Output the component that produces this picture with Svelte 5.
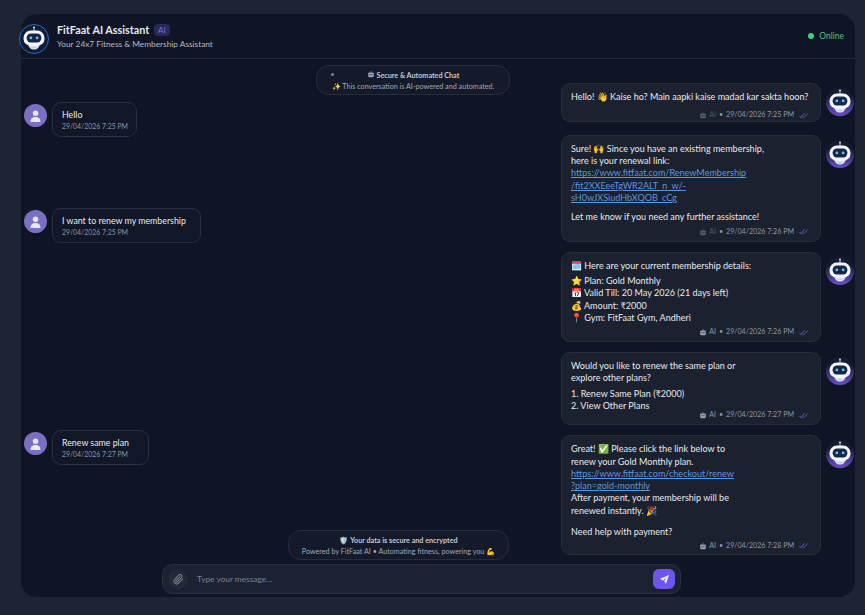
<script>
	const userMessages = [
		{ text: 'Hello', time: '29/04/2026 7:25 PM', gap: 43, width: 85 },
		{ text: 'I want to renew my membership', time: '29/04/2026 7:25 PM', gap: 71, width: 149 },
		{ text: 'Renew same plan', time: '29/04/2026 7:27 PM', gap: 187, width: 97 }
	];
</script>

{#snippet robot()}
	<svg class="robot-art" viewBox="0 0 40 40">
		<rect x="19.4" y="3" width="1.2" height="6" fill="#dfe4f2" />
		<circle cx="20" cy="3.500" r="1.300" fill="#dfe4f2" />
		<path d="M12 27h16c0 5-3.500 8-8 8s-8-3-8-8z" fill="#dcdff0" />
		<rect x="5" y="8" width="30" height="22" rx="10.500" fill="#f5f6fc" />
		<rect x="9.500" y="12" width="21" height="13" rx="6" fill="#182544" />
		<circle cx="15.500" cy="18.500" r="2" fill="#5fc4f5" />
		<circle cx="24.500" cy="18.500" r="2" fill="#5fc4f5" />
		<path d="M18 32h4" stroke="#7fd8e8" stroke-width="1" stroke-linecap="round" />
	</svg>
{/snippet}

{#snippet botIcon()}
	<svg width="8" height="8" viewBox="0 0 10 10"><rect x="1.500" y="3" width="7" height="6" rx="1.500" fill="#9aa4b8" /><rect x="4.600" y="1" width="0.800" height="2" fill="#9aa4b8" /><circle cx="3.800" cy="5.800" r="0.700" fill="#1b212e" /><circle cx="6.200" cy="5.800" r="0.700" fill="#1b212e" /></svg>
{/snippet}

{#snippet meta(time, dim)}
	<div class="meta">
		<span class="tag" class:dim>{@render botIcon()} AI</span>
		<span class="dot">•</span>
		<span>{time}</span>
		<svg class="ticks" width="10" height="7" viewBox="0 0 11 7" fill="none" stroke="#6d63d8" stroke-width="0.900"><path d="M0.500 4l1.600 2L6 1" /><path d="M4 6l1 0L10 1" /></svg>
	</div>
{/snippet}

<div class="page">
	<div class="panel">
		<header class="top">
			<div class="avatar head-avatar">{@render robot()}</div>
			<div class="head-text">
				<div class="title">FitFaat AI Assistant <span class="badge">AI</span></div>
				<div class="sub">Your 24x7 Fitness &amp; Membership Assistant</div>
			</div>
			<div class="status"><span class="status-dot"></span>Online</div>
		</header>

		<div class="chat">
			<div class="notice notice-top">
				<span class="notice-dot"></span>
				<div>{@render botIcon()} <b>Secure &amp; Automated Chat</b></div>
				<div>✨ This conversation is AI-powered and automated.</div>
			</div>

			<div class="col-left">
				{#each userMessages as m}
					<div class="user-row" style="margin-top: {m.gap}px">
						<div class="user-avatar">
							<svg width="11" height="12" viewBox="0 0 12 13" fill="#e8e6f6"><circle cx="6" cy="3.400" r="3" /><path d="M0.500 13c0-3.600 2-5.400 5.500-5.400s5.500 1.800 5.500 5.400z" /></svg>
						</div>
						<div class="user-bubble" style="width: {m.width}px">
							<div class="text">{m.text}</div>
							<div class="user-time">{m.time}</div>
						</div>
					</div>
				{/each}
			</div>

			<div class="col-right">
				<div class="bot-row first">
					<div class="bubble">
						<p>Hello! 👋 Kaise ho? Main aapki kaise madad kar sakta hoon?</p>
						{@render meta('29/04/2026 7:25 PM', true)}
					</div>
					<div class="avatar">{@render robot()}</div>
				</div>
				<div class="bot-row second">
					<div class="bubble">
						<p>Sure! 🙌 Since you have an existing membership,<br />here is your renewal link:<br />
							<span class="link">https://www.fitfaat.com/RenewMembership<br />/fit2XXEeeTgWR2ALT_n_w/-<br />sH0wJXSiudHbXQOB_cCg</span></p>
						<p class="next">Let me know if you need any further assistance!</p>
						{@render meta('29/04/2026 7:26 PM', true)}
					</div>
					<div class="avatar">{@render robot()}</div>
				</div>
				<div class="bot-row">
					<div class="bubble">
						<p>🗓️ Here are your current membership details:</p>
						<p class="list">⭐ Plan: Gold Monthly<br />📅 Valid Till: 20 May 2026 (21 days left)<br />💰 Amount: ₹2000<br />📍 Gym: FitFaat Gym, Andheri</p>
						{@render meta('29/04/2026 7:26 PM', false)}
					</div>
					<div class="avatar">{@render robot()}</div>
				</div>
				<div class="bot-row fourth">
					<div class="bubble">
						<p>Would you like to renew the same plan or<br />explore other plans?</p>
						<p class="list">1. Renew Same Plan (₹2000)<br />2. View Other Plans</p>
						{@render meta('29/04/2026 7:27 PM', false)}
					</div>
					<div class="avatar">{@render robot()}</div>
				</div>
				<div class="bot-row">
					<div class="bubble">
						<p>Great! ✅ Please click the link below to<br />renew your Gold Monthly plan.<br />
							<span class="link">https://www.fitfaat.com/checkout/renew<br />?plan=gold-monthly</span><br />
							After payment, your membership will be<br />renewed instantly. 🎉</p>
						<p class="next last">Need help with payment?</p>
						{@render meta('29/04/2026 7:28 PM', false)}
					</div>
					<div class="avatar">{@render robot()}</div>
				</div>
			</div>

			<div class="notice notice-bottom">
				<div>🛡️ <b>Your data is secure and encrypted</b></div>
				<div>Powered by FitFaat AI • Automating fitness, powering you 💪</div>
			</div>

			<div class="composer">
				<div class="clip">
					<svg width="11" height="11" viewBox="0 0 24 24" fill="none" stroke="#79808f" stroke-width="2.200" stroke-linecap="round" stroke-linejoin="round"><path d="M21 11l-9 9a6 6 0 0 1-8.500-8.500l9-9a4 4 0 0 1 5.700 5.700l-9 9a2 2 0 0 1-2.800-2.800l8.300-8.300" /></svg>
				</div>
				<span class="placeholder">Type your message...</span>
				<button class="send" aria-label="Send">
					<svg width="11" height="11" viewBox="0 0 24 24" fill="#f3f1ff"><path d="M22 2L2 10.500l7 3.500 9-8-6.500 9.500 3.500 6.500z" /></svg>
				</button>
			</div>
		</div>
	</div>
</div>

<style>
	:global(body) {
		background: #1e2434;
		font-family: Lato, "Noto Sans", sans-serif;
	}

	.page {
		width: 865px;
		height: 615px;
		padding: 14px 10px 18px 21px;
		box-sizing: border-box;
		overflow: hidden;
	}

	.panel {
		height: 100%;
		background: #0f1524;
		border-radius: 16px;
		display: flex;
		flex-direction: column;
	}

	.top {
		height: 44px;
		flex: none;
		display: flex;
		align-items: center;
		border-bottom: 1px solid #232a3a;
		padding-right: 11px;
	}

	.avatar {
		width: 28px;
		height: 28px;
		flex: none;
		margin-top: 5px;
		border-radius: 50%;
		background: linear-gradient(#161c33 30%, #6a50cf);
	}

	.robot-art {
		display: block;
		width: 100%;
		height: 100%;
	}

	.head-avatar {
		box-sizing: border-box;
		width: 30px;
		height: 30px;
		margin-left: -2px;
		margin-top: 6px;
		background: #121c36;
		border: 1.500px solid #1f6fc0;
	}

	.head-text {
		margin-left: 8px;
		flex: 1;
		margin-top: 1px;
	}

	.title {
		font-size: 10.800px;
		font-weight: 700;
		color: #e6e9f0;
		line-height: 16px;
	}

	.badge {
		display: inline-block;
		font-size: 8px;
		font-weight: 400;
		color: #7a6ee0;
		background: #2a2a58;
		border-radius: 4px;
		padding: 0 4px;
		line-height: 12px;
		margin-left: 2px;
		vertical-align: 1px;
	}

	.sub {
		font-size: 8.300px;
		color: #b3b9c6;
		line-height: 13px;
	}

	.status {
		display: flex;
		align-items: center;
		gap: 5px;
		font-size: 8.500px;
		color: #43c77a;
	}

	.status-dot {
		width: 6px;
		height: 6px;
		border-radius: 50%;
		background: #3fcf7c;
	}

	.chat {
		flex: 1;
		position: relative;
		display: flex;
		justify-content: space-between;
		padding-right: 1px;
	}

	.col-left {
		padding-left: 3px;
	}

	.user-row {
		display: flex;
		align-items: flex-start;
		gap: 5px;
	}

	.user-avatar {
		width: 23px;
		height: 23px;
		border-radius: 50%;
		background: #7a6fc2;
		display: flex;
		align-items: center;
		justify-content: center;
		margin-top: 2px;
	}

	.user-bubble {
		box-sizing: border-box;
		height: 35px;
		border: 1px solid #2a3040;
		border-radius: 9px;
		padding: 6px 9px 4px;
		background: #111726;
	}

	.text {
		font-size: 8.800px;
		color: #e8eaf0;
		line-height: 12px;
	}

	.user-time {
		font-size: 6.900px;
		color: #8c93a3;
		line-height: 11px;
		white-space: nowrap;
	}

	.col-right {
		display: flex;
		flex-direction: column;
		gap: 10px;
		padding-top: 24px;
	}

	.bot-row {
		display: flex;
		align-items: flex-start;
		gap: 5px;
	}

	.first {
		margin-bottom: 3px;
	}

	.bubble {
		width: 260px;
		box-sizing: border-box;
		background: #1b212e;
		border: 1px solid #262d3c;
		border-radius: 9px;
		padding: 7px 11px 3.500px 9px;
		font-size: 9.050px;
		line-height: 12.300px;
		color: #e8eaf0;
	}

	.bubble p {
		margin: 0;
		white-space: nowrap;
	}

	.bubble .next {
		margin-top: 6.500px;
	}

	.bubble .next.last {
		margin-top: 8.500px;
	}

	.bubble .list {
		margin-top: 2.700px;
	}

	.fourth .list {
		margin-top: 3.500px;
	}

	.link {
		color: #5f97de;
		text-decoration: underline;
	}

	.meta {
		display: flex;
		justify-content: flex-end;
		align-items: center;
		gap: 3px;
		font-size: 7.100px;
		line-height: 10px;
		color: #8f96a6;
		margin-top: 2.800px;
	}

	.first .meta {
		margin-top: 7px;
		margin-bottom: -3px;
	}

	.second .meta {
		margin-top: 3.500px;
		margin-bottom: 1px;
	}

	.fourth .meta {
		margin-top: -2px;
		margin-bottom: 0.500px;
	}

	.tag {
		display: inline-flex;
		align-items: center;
		gap: 2px;
	}

	.tag.dim {
		opacity: 0.45;
	}

	.ticks {
		margin-left: 2px;
	}

	.notice {
		position: absolute;
		box-sizing: border-box;
		height: 30px;
		border-radius: 13px;
		text-align: center;
		white-space: nowrap;
		border: 1px solid #262d3c;
		background: #141a2a;
		color: #a1a8b6;
		font-size: 7.200px;
		line-height: 11.500px;
		padding: 3.500px 6px;
	}

	.notice b {
		font-weight: 700;
		color: #c3c8d2;
	}

	.notice-top {
		top: 6px;
		left: 295px;
		width: 194px;
	}

	.notice-dot {
		position: absolute;
		left: 14px;
		top: 7px;
		width: 3px;
		height: 3px;
		border-radius: 50%;
		background: #7d8494;
	}

	.notice-bottom {
		bottom: 37px;
		left: 267px;
		width: 221px;
	}

	.composer {
		position: absolute;
		left: 141px;
		bottom: 3px;
		width: 519px;
		height: 30px;
		box-sizing: border-box;
		display: flex;
		align-items: center;
		background: #1c2231;
		border: 1px solid #2a3040;
		border-radius: 10px;
		padding: 0 5px;
	}

	.clip {
		width: 20px;
		height: 20px;
		border-radius: 50%;
		background: #232938;
		display: flex;
		align-items: center;
		justify-content: center;
		margin-right: 9px;
	}

	.placeholder {
		flex: 1;
		font-size: 8.300px;
		color: #7c8392;
	}

	.send {
		width: 22px;
		height: 20px;
		border: none;
		padding: 0;
		border-radius: 6px;
		background: #6d55ee;
		display: flex;
		align-items: center;
		justify-content: center;
	}
</style>
